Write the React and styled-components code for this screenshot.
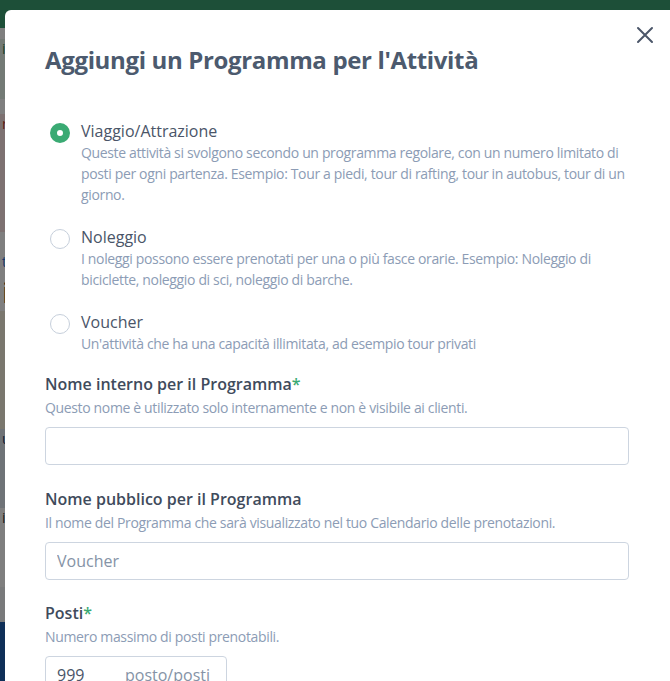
import styled, { createGlobalStyle } from 'styled-components';

const Global = createGlobalStyle`
  html, body { margin: 0; padding: 0; }
  body {
    font-family: "Open Sans", "Liberation Sans", sans-serif;
    background: #ffffff;
    overflow: hidden;
  }
`;

const Page = styled.div`
  width: 670px;
  height: 681px;
  display: flex;
  flex-direction: column;
`;

const TopBar = styled.div`
  height: 28px;
  background: #3a9f70;
`;

const Strip = styled.div`
  height: ${p => p.h}px;
  background: ${p => p.bg};
  color: ${p => p.fg || '#333'};
  font-size: ${p => p.size || 14}px;
  padding-left: 2px;
  overflow: hidden;
`;

const Overlay = styled.div`
  position: fixed;
  inset: 0;
  background: rgba(0, 0, 0, 0.5);
  display: flex;
  align-items: flex-start;
  padding: 10px 0 0 5px;
`;

const Modal = styled.div`
  position: relative;
  width: 665px;
  height: 700px;
  background: #ffffff;
  border-radius: 6px 0 0 0;
  padding: 34px 40px 0 40px;
  box-sizing: border-box;
`;

const Close = styled.button`
  position: absolute;
  top: 13px;
  right: 13px;
  width: 24px;
  height: 24px;
  padding: 0;
  border: 0;
  background: none;
  color: #4b5669;
  display: flex;
  align-items: center;
  justify-content: center;
  cursor: pointer;
`;

const Title = styled.h2`
  margin: 0;
  font-size: 24px;
  line-height: 32px;
  font-weight: 700;
  color: #4c5a6e;
  letter-spacing: -0.35px;
`;

const Options = styled.div`
  display: flex;
  flex-direction: column;
  gap: 21px;
  margin-top: 44px;
`;

const Option = styled.label`
  display: flex;
  gap: 11px;
  align-items: flex-start;
`;

const Radio = styled.span`
  flex: none;
  width: 20px;
  height: 20px;
  margin: 3px 0 0 5px;
  border-radius: 50%;
  box-sizing: border-box;
  border: ${p => (p.checked ? '7px solid #3aaa73' : '1.5px solid #c6cfdb')};
  background: #fff;
`;

const OptionText = styled.div`
  display: flex;
  flex-direction: column;
`;

const OptionTitle = styled.span`
  font-size: 16px;
  line-height: 22px;
  color: #4a5568;
`;

const Desc = styled.span`
  font-size: 14px;
  line-height: 21px;
  color: #8c9cb5;
  letter-spacing: -0.35px;
`;

const Field = styled.div`
  display: flex;
  flex-direction: column;
  margin-top: ${p => p.top}px;
`;

const Label = styled.span`
  font-size: 16px;
  line-height: 22px;
  font-weight: 600;
  color: #3f4b5c;
`;

const Star = styled.span`
  color: #3aaa73;
`;

const Hint = styled.span`
  font-size: 14px;
  line-height: 21px;
  margin-top: 2px;
  color: #8c9cb5;
  letter-spacing: -0.35px;
`;

const Input = styled.input`
  margin-top: 9px;
  height: 38px;
  width: ${p => p.w || 584}px;
  box-sizing: border-box;
  border: 1px solid #cdd5e0;
  border-radius: 4px;
  padding: 0 11px;
  font-family: inherit;
  font-size: 16px;
  color: #4a5568;
  outline: none;
  &::placeholder { color: #8593a6; }
`;

const NumberBox = styled.div`
  margin-top: 9px;
  height: 38px;
  width: 182px;
  box-sizing: border-box;
  border: 1px solid #cdd5e0;
  border-radius: 4px;
  padding: 0 11px;
  display: flex;
  align-items: center;
  font-size: 16px;
`;

const NumValue = styled.span`
  width: 68px;
  color: #4a5568;
`;

const Unit = styled.span`
  color: #8593a6;
`;

const options = [
  {
    title: 'Viaggio/Attrazione',
    desc: 'Queste attività si svolgono secondo un programma regolare, con un numero limitato di posti per ogni partenza. Esempio: Tour a piedi, tour di rafting, tour in autobus, tour di un giorno.',
    checked: true,
  },
  {
    title: 'Noleggio',
    desc: 'I noleggi possono essere prenotati per una o più fasce orarie. Esempio: Noleggio di biciclette, noleggio di sci, noleggio di barche.',
  },
  {
    title: 'Voucher',
    desc: "Un'attività che ha una capacità illimitata, ad esempio tour privati",
  },
];

export default function App() {
  return (
    <>
      <Global />
      <Page>
        <TopBar />
        <Strip h={12} bg="#ffffff" />
        <Strip h={60} bg="#e6f4ea" fg="#2e7d4f">i</Strip>
        <Strip h={15} bg="#ffffff" />
        <Strip h={120} bg="#fbe3e3" fg="#c0392b">r</Strip>
        <Strip h={20} bg="#ffffff" />
        <Strip h={20} bg="#ffffff" fg="#2a6fd6">t</Strip>
        <Strip h={40} bg="#ffffff" fg="#111" size={30}>i</Strip>
        <Strip h={120} bg="#f4eedc" fg="#6b5a3a" />
        <Strip h={80} bg="#dfe6ef" fg="#1f3d6b">u</Strip>
        <Strip h={80} bg="#ffffff" fg="#333">i</Strip>
        <Strip h={35} bg="#f3f4f6" />
        <Strip h={60} bg="#1f5fb0" />
      </Page>
      <Overlay>
        <Modal>
          <Close aria-label="Chiudi">
            <svg width="18" height="18" viewBox="0 0 18 18" fill="none" stroke="currentColor" strokeWidth="2" strokeLinecap="round">
              <path d="M2 2 L16 16 M16 2 L2 16" />
            </svg>
          </Close>
          <Title>Aggiungi un Programma per l'Attività</Title>
          <Options>
            {options.map(o => (
              <Option key={o.title}>
                <Radio checked={o.checked} />
                <OptionText>
                  <OptionTitle>{o.title}</OptionTitle>
                  <Desc>{o.desc}</Desc>
                </OptionText>
              </Option>
            ))}
          </Options>
          <Field top={19}>
            <Label>Nome interno per il Programma<Star>*</Star></Label>
            <Hint>Questo nome è utilizzato solo internamente e non è visibile ai clienti.</Hint>
            <Input />
          </Field>
          <Field top={23}>
            <Label>Nome pubblico per il Programma</Label>
            <Hint>Il nome del Programma che sarà visualizzato nel tuo Calendario delle prenotazioni.</Hint>
            <Input placeholder="Voucher" />
          </Field>
          <Field top={22}>
            <Label>Posti<Star>*</Star></Label>
            <Hint>Numero massimo di posti prenotabili.</Hint>
            <NumberBox>
              <NumValue>999</NumValue>
              <Unit>posto/posti</Unit>
            </NumberBox>
          </Field>
        </Modal>
      </Overlay>
    </>
  );
}
